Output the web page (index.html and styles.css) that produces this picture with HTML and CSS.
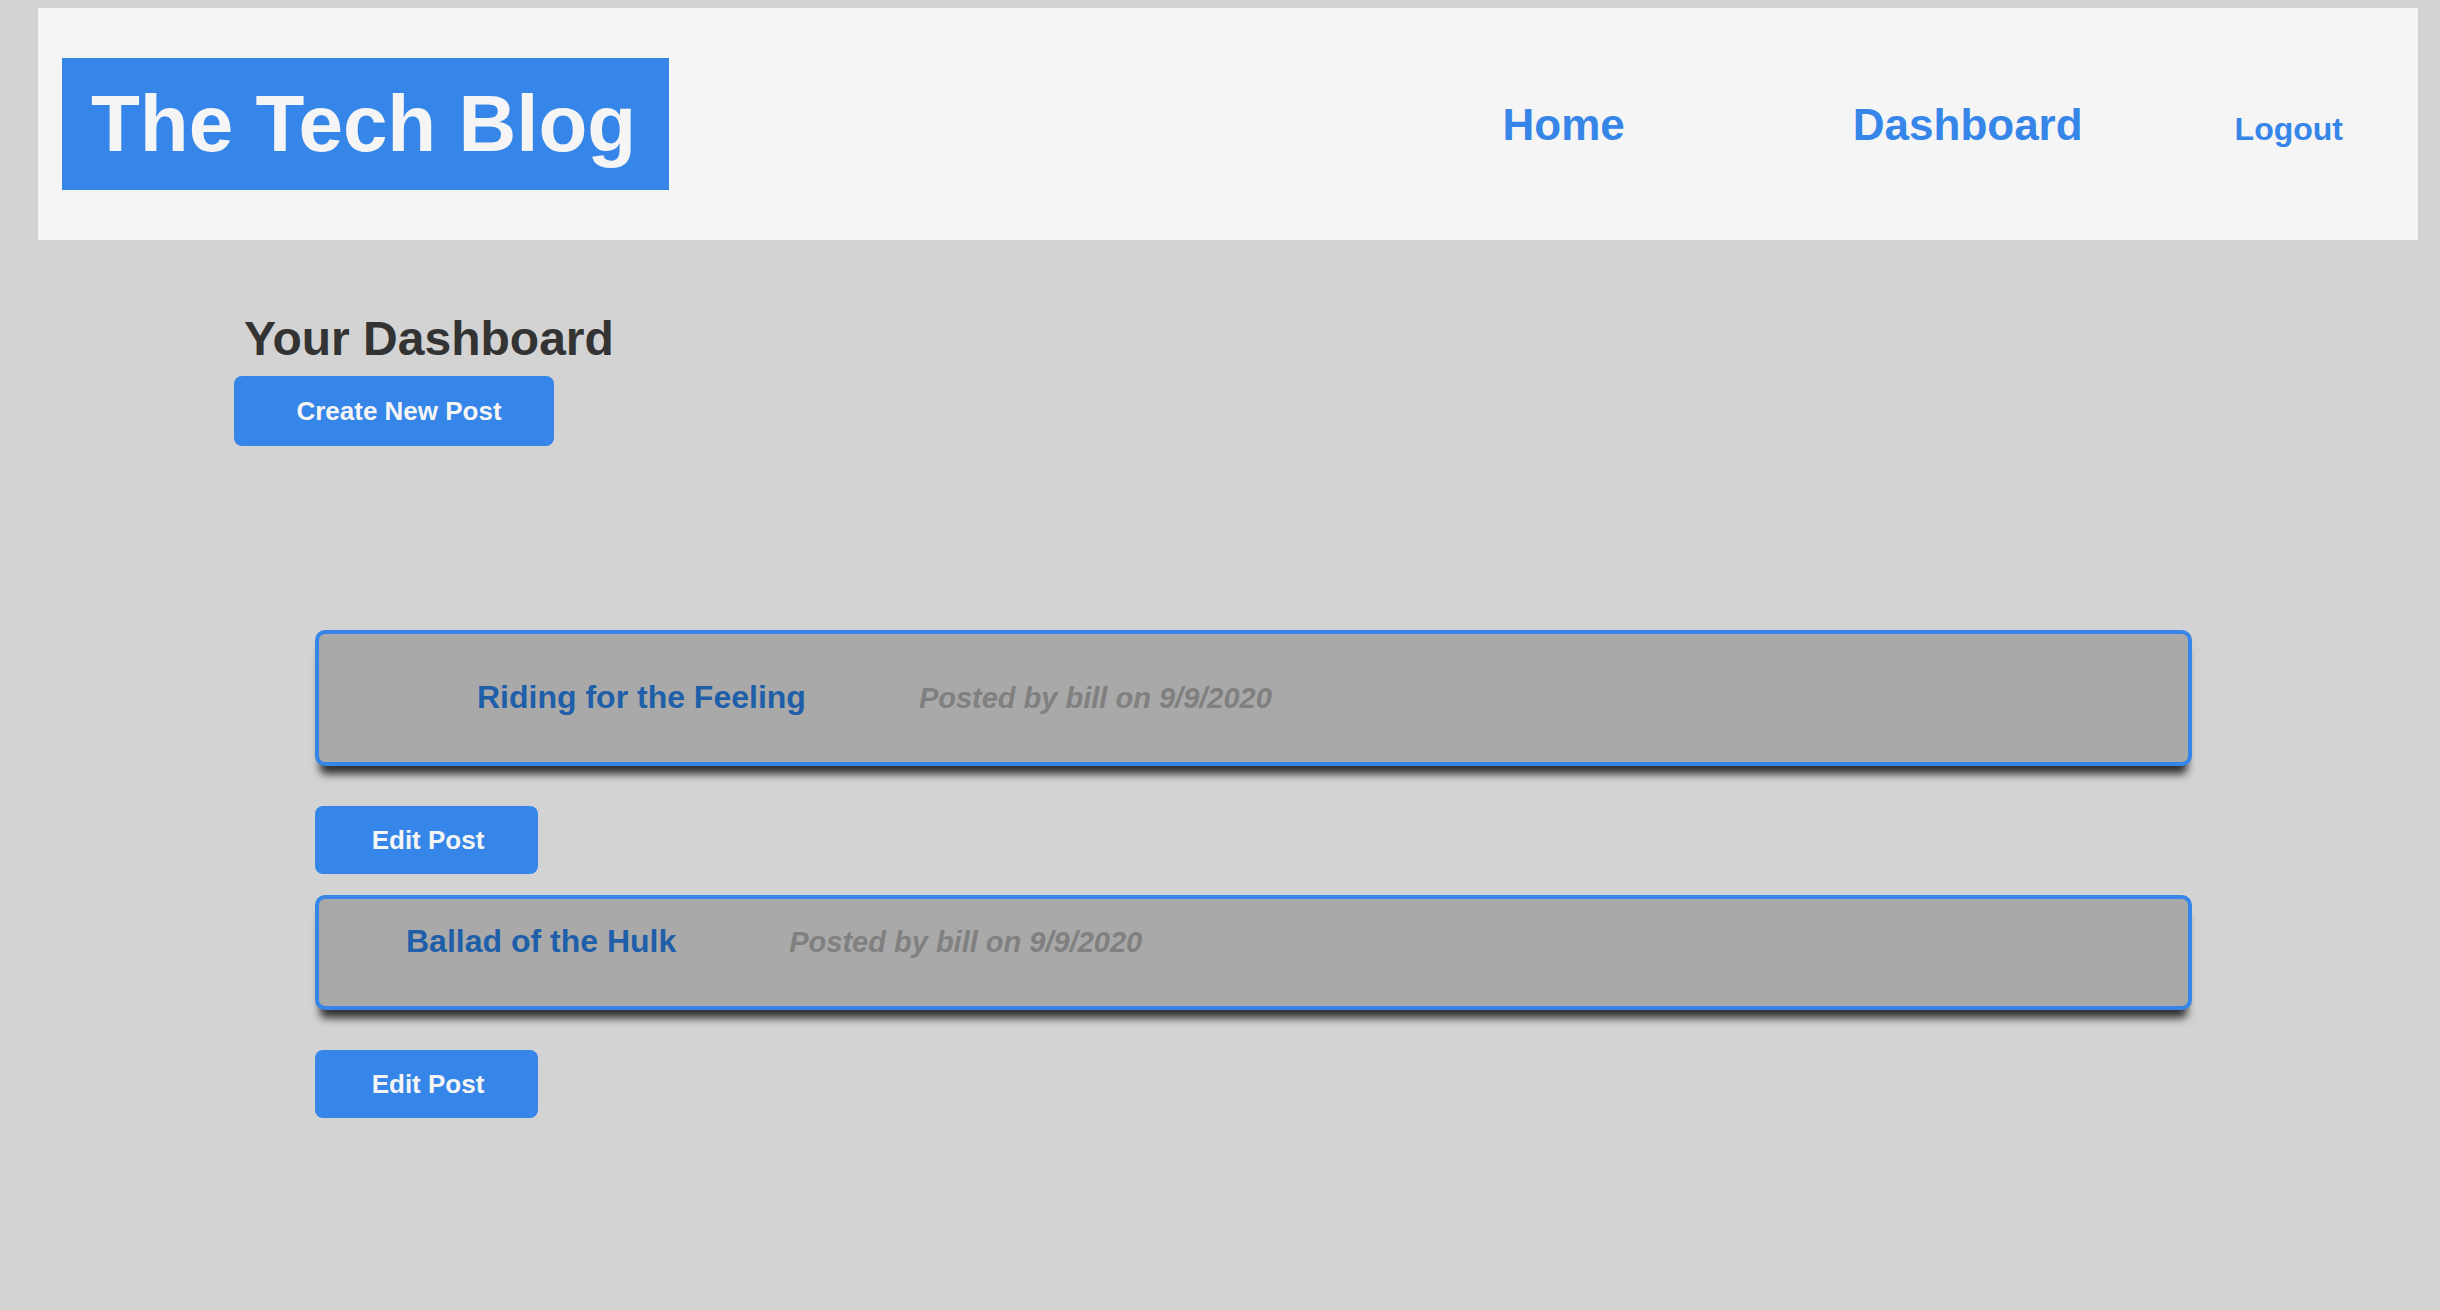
FILE: index.html
```html
<!DOCTYPE html>
<html lang="en">
<head>
<meta charset="utf-8">
<title>The Tech Blog</title>
<link rel="stylesheet" href="styles.css">
</head>
<body>
<header class="site-header">
  <h1 class="logo">The Tech Blog</h1>
  <nav class="nav">
    <a class="nav-link nav-home" href="#">Home</a>
    <a class="nav-link nav-dash" href="#">Dashboard</a>
    <a class="nav-link nav-logout" href="#">Logout</a>
  </nav>
</header>
<main class="dashboard">
  <h2 class="dash-title">Your Dashboard</h2>
  <button class="btn btn-create">Create New Post</button>
  <section class="posts">
    <article class="post-card post-card--first">
      <span class="post-title">Riding for the Feeling</span>
      <span class="post-meta">Posted by bill on 9/9/2020</span>
    </article>
    <button class="btn btn-edit">Edit Post</button>
    <article class="post-card post-card--second">
      <span class="post-title">Ballad of the Hulk</span>
      <span class="post-meta">Posted by bill on 9/9/2020</span>
    </article>
    <button class="btn btn-edit">Edit Post</button>
  </section>
</main>
</body>
</html>
```
FILE: styles.css
```css
* { box-sizing: border-box; }
html, body { margin: 0; padding: 0; }
body {
  background: #d3d3d3;
  font-family: "Liberation Sans", Arial, Helvetica, sans-serif;
  min-height: 1310px;
}
.site-header {
  margin: 8px 22px 0 38px;
  height: 232px;
  background: #f5f5f5;
  display: flex;
  align-items: center;
  justify-content: space-between;
  padding: 0 75px 0 24px;
}
.logo {
  margin: 0;
  background: #3586e8;
  color: #f5f5f5;
  font-size: 80px;
  font-weight: 700;
  line-height: normal;
  padding: 20px 33px 20px 29px;
}
.nav {
  display: flex;
  align-items: baseline;
  padding-top: 1px;
}
.nav-link {
  color: #3586e8;
  font-weight: 700;
  text-decoration: none;
}
.nav-home { font-size: 44px; }
.nav-dash { font-size: 44px; margin-left: 228px; }
.nav-logout { font-size: 32px; margin-left: 152px; }

.dashboard {
  padding: 71px 0 0 234px;
  display: flex;
  flex-direction: column;
  align-items: flex-start;
}
.dash-title {
  margin: 0 0 0 10px;
  font-size: 48px;
  font-weight: 700;
  color: #333333;
  line-height: normal;
}
.btn {
  border: none;
  background: #3586e8;
  color: #f5f5f5;
  font-family: "Liberation Sans", Arial, Helvetica, sans-serif;
  font-weight: 700;
  font-size: 26px;
  border-radius: 8px;
  cursor: pointer;
  text-align: center;
  padding: 0;
}
.btn-create {
  margin-top: 10px;
  width: 320px;
  height: 70px;
  padding-left: 10px;
}
.posts {
  margin: 184px 0 0 81px;
  width: 1877px;
  display: flex;
  flex-direction: column;
  align-items: flex-start;
}
.post-card {
  width: 100%;
  background: #a9a9a9;
  border: 4px solid #3586e8;
  border-radius: 10px;
  box-shadow: 0 13px 9px -5px rgba(0, 0, 0, 0.78);
  display: flex;
  align-items: baseline;
  padding-bottom: 46px;
}
.post-card--first { padding-top: 45px; padding-left: 158px; }
.post-card--second { padding-top: 24px; padding-left: 87px; margin-top: 21px; }
.post-title {
  font-size: 32px;
  font-weight: 700;
  color: #1f5fa9;
  line-height: normal;
}
.post-meta {
  margin-left: 113px;
  font-size: 29px;
  font-weight: 700;
  font-style: italic;
  color: #808080;
}
.btn-edit {
  margin-top: 40px;
  width: 223px;
  height: 68px;
  padding-left: 3px;
}
```
